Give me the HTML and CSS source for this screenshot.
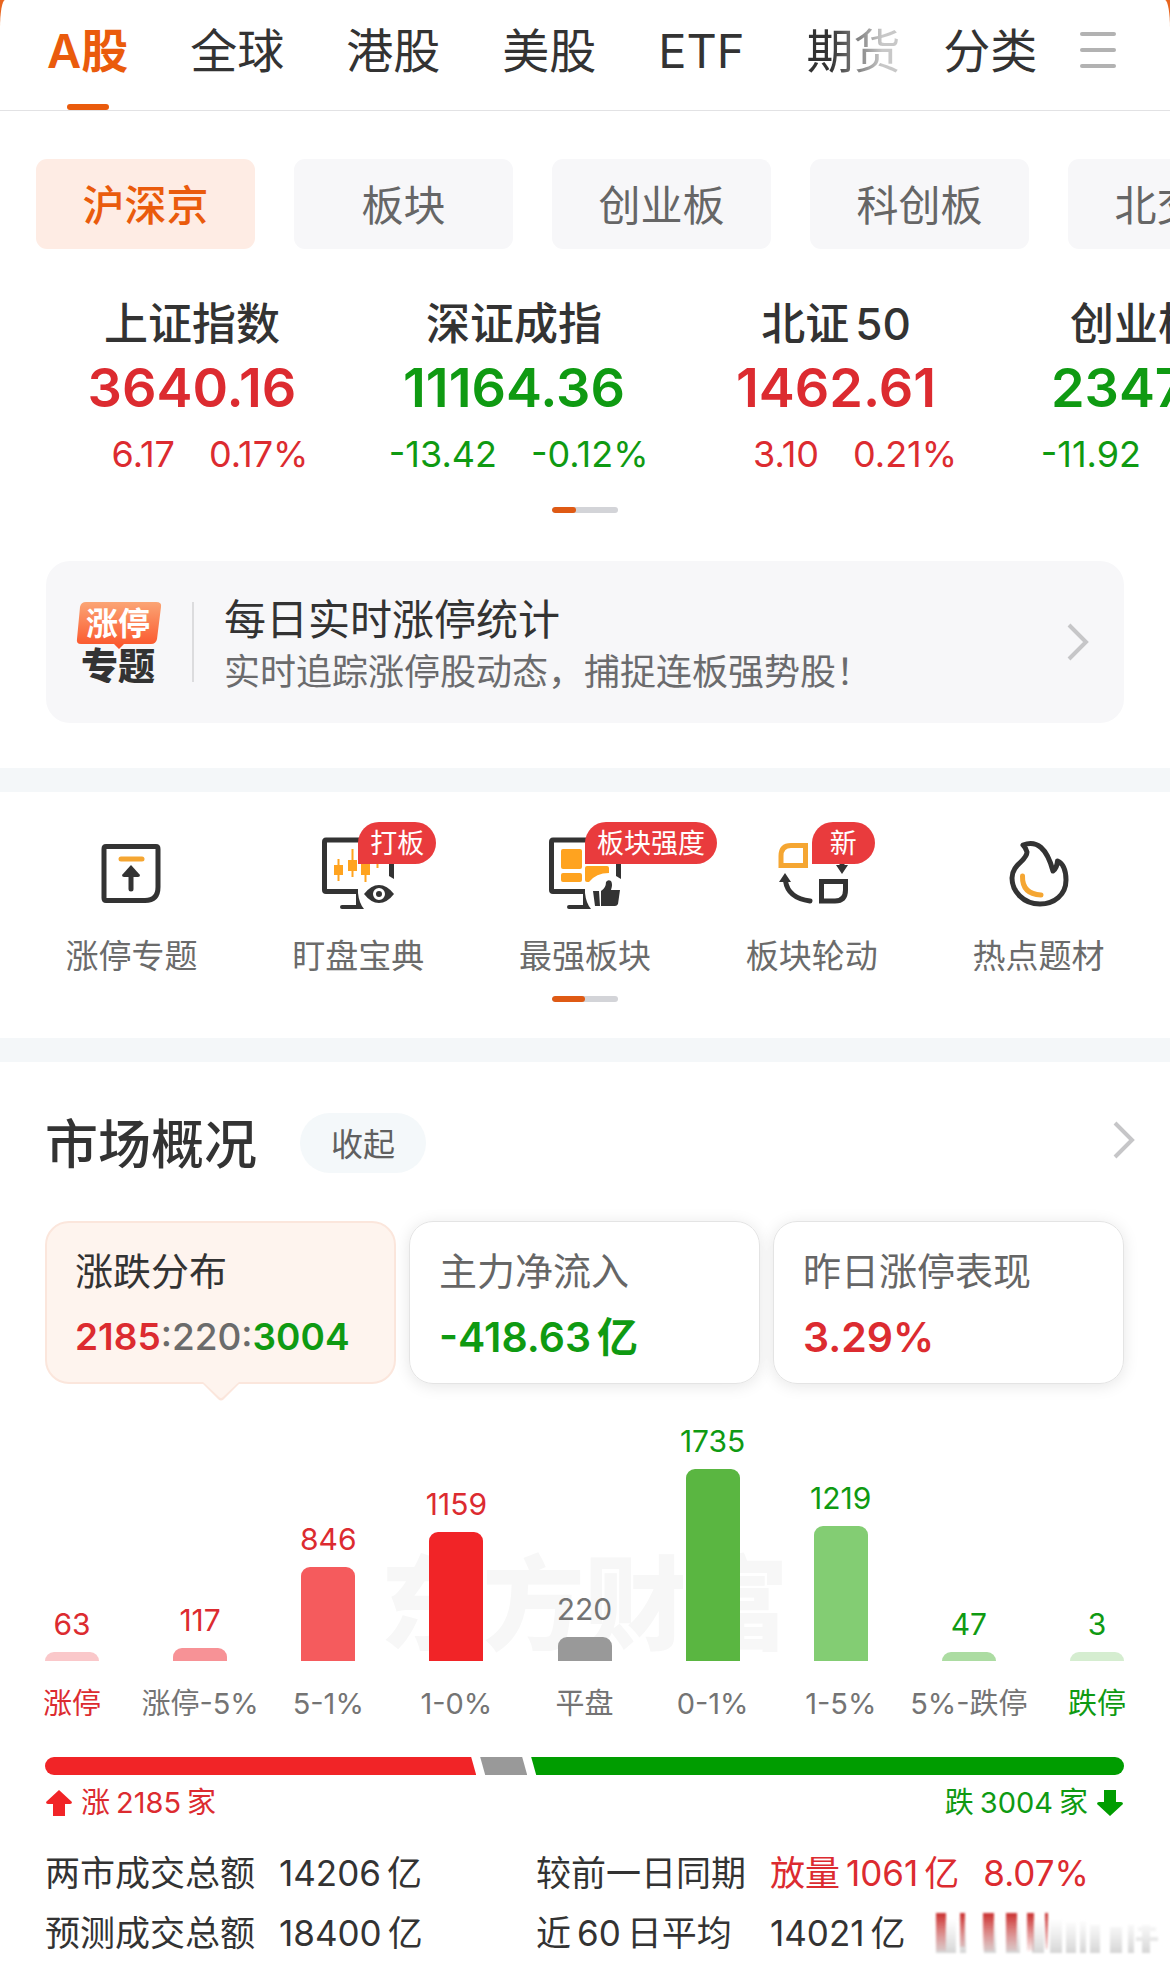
FILE: index.html
```html
<!DOCTYPE html>
<html lang="zh-CN">
  <head>
    <meta charset="UTF-8" />
    <meta name="viewport" content="width=device-width, initial-scale=1.0" />
    <title>A股行情</title>
    <link rel="stylesheet" href="styles.css">
  </head>
  <body>
    <div class="page">
      <nav class="tabs">
        <div class="tab-list">
          <a class="tab active" href="#a">A股</a>
          <a class="tab" href="#global">全球</a>
          <a class="tab" href="#hk">港股</a>
          <a class="tab" href="#us">美股</a>
          <a class="tab" href="#etf">ETF</a>
          <a class="tab fade" href="#futures">期货</a>
        </div>
        <a class="tab" href="#category">分类</a>
        <button class="menu" type="button" aria-label="菜单">
          <span></span><span></span><span></span>
        </button>
      </nav>

      <div class="chips">
        <button class="chip active" type="button">沪深京</button>
        <button class="chip" type="button">板块</button>
        <button class="chip" type="button">创业板</button>
        <button class="chip" type="button">科创板</button>
        <button class="chip" type="button">北交所</button>
      </div>

      <div class="indexes">
        <a class="index up" href="#sh">
          <span class="index-name">上证指数</span>
          <span class="index-value">3640.16</span>
          <span class="index-change"><span>6.17</span><span>0.17%</span></span>
        </a>
        <a class="index down" href="#sz">
          <span class="index-name">深证成指</span>
          <span class="index-value">11164.36</span>
          <span class="index-change"><span>-13.42</span><span>-0.12%</span></span>
        </a>
        <a class="index up" href="#bz">
          <span class="index-name">北证<span class="n">50</span></span>
          <span class="index-value">1462.61</span>
          <span class="index-change"><span>3.10</span><span>0.21%</span></span>
        </a>
        <a class="index down" href="#cy">
          <span class="index-name">创业板指</span>
          <span class="index-value">2347.06</span>
          <span class="index-change"><span>-11.92</span></span>
        </a>
      </div>
      <div class="pager pager-index"><span class="pager-on short"></span></div>

      <a class="banner" href="#limit-up">
        <svg class="banner-logo" width="86" height="82" viewBox="0 0 86 82">
          <defs>
            <linearGradient id="logoBg" x1="0" y1="0" x2="0" y2="1">
              <stop offset="0" stop-color="#fba575" />
              <stop offset="1" stop-color="#fb5228" />
            </linearGradient>
          </defs>
          <path d="M10 1H80Q86 1 85 6L81 38Q80 43 75 43H48L43 48L38 43H5Q0 43 1 38L4 6Q5 1 10 1Z" fill="url(#logoBg)" />
          <text class="logo-top" x="42" y="34">涨停</text>
          <text class="logo-bottom" x="42" y="79">专题</text>
        </svg>
        <span class="banner-text">
          <span class="banner-title">每日实时涨停统计</span>
          <span class="banner-sub">实时追踪涨停股动态，捕捉连板强势股！</span>
        </span>
        <svg class="chevron" width="24" height="40" viewBox="0 0 24 40">
          <path d="M3 3L20 20L3 37" />
        </svg>
      </a>

      <div class="band"></div>

      <div class="quick">
        <a class="quick-item" href="#q1">
          <svg class="icon" viewBox="0 0 72 72">
            <path class="line" d="M11 9.500H61Q63 9.500 63 12V50Q63 63.500 50 63.500H11Q9 63.500 9 61V12Q9 9.500 11 9.500Z" />
            <path class="line gold" d="M26 22H47" />
            <path class="line" d="M36 36V52" />
            <path class="solid" d="M36 28L45 38Q45 40 43 40H29Q27 40 27 38Z" />
          </svg>
          <span class="quick-label">涨停专题</span>
        </a>
        <a class="quick-item" href="#q2">
          <svg class="icon" viewBox="0 0 72 72">
            <path class="line flat" d="M36 54.500H4Q2.500 54.500 2.500 53V5Q2.500 3 4 3H68Q69.500 3 69.500 5V39" />
            <path class="solid" d="M67 25H72V42L67 39Z" />
            <path class="solid" d="M34 56H36Q37 66 42 72H20Q18 72 18 70Q18 68 20 68H34Z" />
            <path class="thin-gold" d="M16.500 22V44M30.500 12V40M43.500 20V45M55.500 20V31" />
            <path class="solid-gold" d="M12 28H21V38H12ZM26 23H35V34H26ZM39 26H48V38H39Z" />
            <path class="solid" fill-rule="evenodd" d="M42 57Q49 48 57 48Q65 48 72 57Q65 66 57 66Q49 66 42 57ZM57 51A6 6 0 1 0 57 63A6 6 0 1 0 57 51ZM57 54A3 3 0 1 1 57 60A3 3 0 1 1 57 54Z" />
          </svg>
          <span class="badge">打板</span>
          <span class="quick-label">盯盘宝典</span>
        </a>
        <a class="quick-item" href="#q3">
          <svg class="icon" viewBox="0 0 72 72">
            <path class="line flat" d="M36 54.500H4Q2.500 54.500 2.500 53V5Q2.500 3 4 3H68Q69.500 3 69.500 5V39" />
            <path class="solid" d="M67 25H72V42L67 39Z" />
            <path class="solid" d="M34 56H36Q37 66 42 72H20Q18 72 18 70Q18 68 20 68H34Z" />
            <rect class="solid-gold" x="12" y="12" width="21" height="20" rx="2" />
            <rect class="solid-gold" x="12" y="36" width="21" height="9" rx="2" />
            <path class="solid-gold" d="M38 29H58Q60 29 60 31V36Q47 36 40 45H38Q36 45 36 43V31Q36 29 38 29Z" />
            <path class="solid" d="M44 54H50L51 69H46ZM52 54Q57 51 57 45Q59 42 62 44Q64 47 62 53H71L69 67Q68 69 66 69H52Z" />
          </svg>
          <span class="badge">板块强度</span>
          <span class="quick-label">最强板块</span>
        </a>
        <a class="quick-item" href="#q4">
          <svg class="icon" viewBox="0 0 72 72">
            <path class="line gold sharp" d="M15 8.500H29.500V28.500H5V19Q5 8.500 15 8.500Z" />
            <path class="line sharp" d="M45.500 44.500H69.500V53Q69.500 64 59 64H45.500Z" />
            <path class="line" d="M9.500 44Q12 61 34 64" />
            <path class="line" d="M66 18V28" />
            <path class="solid" d="M9 36L15 45H3ZM66 37L60 28H72Z" />
          </svg>
          <span class="badge">新</span>
          <span class="quick-label">板块轮动</span>
        </a>
        <a class="quick-item" href="#q5">
          <svg class="icon" viewBox="0 0 72 72">
            <path class="line" d="M20 8Q41 0 50 34Q54 31 54.500 24Q63 28 63 43C63 58 51 67 37 67C20 67 9 54 9 41C9 27 24 24 24 15Q23 11 20 8Z" />
            <path class="line gold" d="M19.500 39Q19 57 38 58" />
          </svg>
          <span class="quick-label">热点题材</span>
        </a>
      </div>
      <div class="pager pager-quick"><span class="pager-on"></span></div>

      <div class="band"></div>

      <section class="market">
        <div class="market-head">
          <h2>市场概况</h2>
          <button class="fold" type="button">收起</button>
          <a class="more" href="#market" aria-label="更多">
            <svg class="chevron" width="24" height="40" viewBox="0 0 24 40">
              <path d="M3 3L20 20L3 37" />
            </svg>
          </a>
        </div>

        <div class="cards">
          <button class="card active" type="button">
            <span class="card-label">涨跌分布</span>
            <span class="card-value small"><b class="up">2185</b>:220:<b class="down">3004</b></span>
            <svg class="card-arrow" width="40" height="20" viewBox="0 0 40 20">
              <path d="M0 0H40L23 17Q20 20 17 17Z" fill="#fbe6dc" />
              <path d="M2 0H38L22 15Q20 17 18 15Z" fill="#fef4ee" />
            </svg>
          </button>
          <button class="card" type="button">
            <span class="card-label">主力净流入</span>
            <span class="card-value down"><b>-418.63<span class="n">亿</span></b></span>
          </button>
          <button class="card" type="button">
            <span class="card-label">昨日涨停表现</span>
            <span class="card-value up"><b>3.29%</b></span>
          </button>
        </div>

        <div class="chart">
          <div class="watermark">东方财富</div>
          <div class="col up"><span class="num">63</span><span class="bar r1" style="height: 9px"></span><span class="cat">涨停</span></div>
          <div class="col up"><span class="num">117</span><span class="bar r2" style="height: 13px"></span><span class="cat gray">涨停-5%</span></div>
          <div class="col up"><span class="num">846</span><span class="bar r3" style="height: 94px"></span><span class="cat gray">5-1%</span></div>
          <div class="col up"><span class="num">1159</span><span class="bar r4" style="height: 129px"></span><span class="cat gray">1-0%</span></div>
          <div class="col gray"><span class="num">220</span><span class="bar flat" style="height: 24px"></span><span class="cat">平盘</span></div>
          <div class="col down"><span class="num">1735</span><span class="bar g4" style="height: 192px"></span><span class="cat gray">0-1%</span></div>
          <div class="col down"><span class="num">1219</span><span class="bar g3" style="height: 135px"></span><span class="cat gray">1-5%</span></div>
          <div class="col down"><span class="num">47</span><span class="bar g2" style="height: 9px"></span><span class="cat gray">5%-跌停</span></div>
          <div class="col down"><span class="num">3</span><span class="bar g1" style="height: 9px"></span><span class="cat">跌停</span></div>
        </div>

        <div class="ratio">
          <span class="ratio-up" style="flex-grow: 2185"></span>
          <span class="ratio-flat"></span>
          <span class="ratio-down" style="flex-grow: 3004"></span>
        </div>
        <div class="legend">
          <div class="legend-item up">
            <svg width="28" height="28" viewBox="0 0 28 28"><path d="M14 1L27 13Q27 15 25 15H20V27H8V15H3Q1 15 1 13Z" fill="#f12427" /></svg>
            <span>涨<span class="n both">2185</span>家</span>
          </div>
          <div class="legend-item down">
            <span>跌<span class="n both">3004</span>家</span>
            <svg width="28" height="28" viewBox="0 0 28 28"><path d="M14 27L27 15Q27 13 25 13H20V1H8V13H3Q1 13 1 15Z" fill="#009d00" /></svg>
          </div>
        </div>

        <div class="stats">
          <div class="stat"><span class="stat-label">两市成交总额</span><span>14206<span class="n">亿</span></span></div>
          <div class="stat"><span class="stat-label">较前一日同期</span><span class="up">放量<span class="n both">1061</span>亿</span><span class="up">8.07%</span></div>
          <div class="stat"><span class="stat-label">预测成交总额</span><span>18400<span class="n">亿</span></span></div>
          <div class="stat">
            <span class="stat-label">近<span class="n both">60</span>日平均</span><span>14021<span class="n">亿</span></span>
            <svg class="smudge" width="230" height="44" viewBox="0 0 230 44">
              <defs>
                <linearGradient id="redFade" x1="0" y1="0" x2="0" y2="1">
                  <stop offset="0" stop-color="#c9302f" />
                  <stop offset="1" stop-color="#c9302f" stop-opacity="0.1" />
                </linearGradient>
                <linearGradient id="grayFade" x1="0" y1="0" x2="0" y2="1">
                  <stop offset="0" stop-color="#ccc" stop-opacity="0" />
                  <stop offset="1" stop-color="#c4c4c4" stop-opacity="0.7" />
                </linearGradient>
                <filter id="soft"><feGaussianBlur stdDeviation="1" /></filter>
              </defs>
              <g filter="url(#soft)">
                <path fill="url(#grayFade)" d="M6 8H26V42H6ZM30 8H36V42H30ZM54 8H66V42H54ZM76 8H90V42H76ZM102 8H114V42H102ZM120 8H132V42H120ZM136 12H146V42H136ZM150 10H156V42H150ZM160 14H170V42H160ZM180 16H192V42H180ZM198 14H204V42H198ZM208 16H226V20H208ZM206 26H228V30H206ZM212 14H220V42H212Z" />
                <path fill="url(#redFade)" d="M6 2H16V40H6ZM30 2H35V36H30ZM53 2H64V40H53ZM76 2H87V40H76ZM97 2H104V40H97ZM115 2H118V38H115Z" />
              </g>
            </svg>
          </div>
        </div>
      </section>
    </div>
  </body>
</html>
```
FILE: styles.css
```css
* {
  box-sizing: border-box;
}

body {
  margin: 0;
  background-color: #e8651f;
  color: #333;
  font-family: Inter, "Noto Sans CJK SC", sans-serif;
}

.page {
  background-color: #fff;
  border-radius: 5px 5px 0 0 / 28px 28px 0 0;
  overflow: hidden;
}

a {
  color: inherit;
  text-decoration: none;
}

button {
  padding: 0;
  border: none;
  background: none;
  color: inherit;
  font-family: inherit;
  cursor: pointer;
}

b {
  font-weight: 600;
}

/* gap between digits and chinese text */
.n {
  margin-left: 6px;
}

.n.both {
  margin-right: 6px;
}

.up {
  color: #dc2b30;
}

.down {
  color: #0f9a12;
}

.gray {
  color: #747474;
}

/* top tabs */
.tabs {
  display: flex;
  justify-content: space-between;
  height: 111px;
  padding: 0 54px 0 47px;
  border-bottom: 1px solid #e2e2e4;
}

.tab-list {
  display: flex;
  gap: 62px;
}

.tab {
  position: relative;
  font-size: 47px;
  line-height: 102px;
}

.tab.active {
  color: #ea5b0c;
  font-weight: 600;
}

.tab.active::after {
  content: "";
  position: absolute;
  bottom: 0;
  left: 50%;
  width: 42px;
  height: 6px;
  margin-left: -21px;
  border-radius: 3px;
  background-color: #ea5b0c;
}

.tab.fade {
  background: linear-gradient(to right, #333 25%, #c8c8c8 80%);
  background-clip: text;
  -webkit-background-clip: text;
  color: transparent;
}

.menu {
  display: flex;
  flex-direction: column;
  justify-content: space-between;
  width: 36px;
  height: 36px;
  margin-top: 32px;
}

.menu span {
  width: 36px;
  height: 4px;
  border-radius: 2px;
  background-color: #b2b2b2;
}

/* sub tabs */
.chips {
  display: flex;
  gap: 39px;
  padding: 48px 0 0 36px;
  overflow: hidden;
}

.chip {
  flex: 0 0 219px;
  height: 90px;
  padding-bottom: 3px;
  border-radius: 11px;
  background-color: #f7f7f9;
  color: #666;
  font-size: 42px;
}

.chip.active {
  background-color: #feece4;
  color: #ea5b0c;
  font-weight: 500;
}

/* index quotes */
.indexes {
  display: flex;
  padding: 45px 0 0 31px;
  overflow: hidden;
}

.index {
  flex: 0 0 322px;
  display: flex;
  flex-direction: column;
  text-align: center;
}

.index-name {
  color: #333;
  font-size: 44px;
  font-weight: 500;
  line-height: 60px;
}

.index-value {
  font-size: 54px;
  font-weight: 600;
  line-height: 68px;
}

.index-change {
  display: grid;
  grid-template-columns: 1fr 1fr;
  gap: 34px;
  margin-top: 10px;
  font-size: 36px;
  line-height: 44px;
  text-align: left;
}

.index-change span:first-child {
  text-align: right;
}

.pager {
  width: 66px;
  height: 6px;
  margin: 0 auto;
  border-radius: 3px;
  background-color: #d3d4d8;
  overflow: hidden;
}

.pager-on {
  display: block;
  width: 33px;
  height: 6px;
  border-radius: 3px;
  background-color: #df5a14;
}

.pager-on.short {
  width: 24px;
}

.pager-index {
  margin-top: 31px;
}

/* banner */
.banner {
  display: flex;
  align-items: center;
  height: 162px;
  margin: 48px 46px 45px;
  padding: 0 34px 0 30px;
  border-radius: 24px;
  background-color: #f7f7f9;
}

.banner-logo {
  flex: none;
}

.logo-top,
.logo-bottom {
  text-anchor: middle;
  font-weight: 700;
}

.logo-top {
  fill: #fff;
  font-size: 32px;
}

.logo-bottom {
  fill: #333;
  font-size: 37px;
  font-weight: 900;
}

.banner-text {
  flex: 1;
  display: flex;
  flex-direction: column;
  margin-left: 30px;
  padding: 3px 0 0 32px;
  background: linear-gradient(#dcdcde, #dcdcde) no-repeat left center / 2px 80px;
}

.banner-title {
  font-size: 42px;
  line-height: 56px;
}

.banner-sub {
  color: #6b6b6d;
  font-size: 36px;
  line-height: 48px;
}

.chevron {
  display: block;
  flex: none;
  fill: none;
  stroke: #c6c6c8;
  stroke-width: 4;
}

.band {
  height: 24px;
  background-color: #f4f7f9;
}

/* shortcuts */
.quick {
  display: grid;
  grid-template-columns: repeat(5, 1fr);
  padding: 30px 18px 0;
}

.quick-item {
  position: relative;
  display: flex;
  flex-direction: column;
  align-items: center;
  padding-top: 15px;
}

.icon {
  width: 72px;
  height: 72px;
}

.line {
  fill: none;
  stroke: #333;
  stroke-width: 5;
  stroke-linecap: round;
  stroke-linejoin: round;
}

.line.flat {
  stroke-linecap: butt;
}

.line.sharp {
  stroke-linejoin: miter;
}

.line.gold {
  stroke: #f5a632;
}

.thin-gold {
  fill: none;
  stroke: #ffa31f;
  stroke-width: 2;
}

.solid {
  fill: #333;
}

.solid-gold {
  fill: #ffa31f;
}

.badge {
  position: absolute;
  top: 0;
  left: 50%;
  min-width: 63px;
  padding: 1px 12px 0;
  border-radius: 21px 21px 21px 0;
  background-color: #e93b3d;
  color: #fff;
  font-size: 27px;
  line-height: 41px;
  text-align: center;
  white-space: nowrap;
}

.quick-label {
  margin-top: 23px;
  color: #6b6b6b;
  font-size: 33px;
  line-height: 48px;
}

.pager-quick {
  margin-top: 16px;
  margin-bottom: 36px;
}

/* market overview */
.market {
  padding: 51px 46px 10px 45px;
}

.market-head {
  display: flex;
  align-items: center;
  height: 60px;
}

h2 {
  margin: 0;
  padding-top: 3px;
  font-size: 53px;
  font-weight: 500;
  line-height: 60px;
}

.fold {
  width: 126px;
  height: 60px;
  margin-left: 43px;
  padding-bottom: 3px;
  border-radius: 30px;
  background-color: #f4f8fa;
  color: #606060;
  font-size: 32px;
}

.more {
  margin-left: auto;
  margin-right: -12px;
  padding-bottom: 6px;
}

.cards {
  display: grid;
  grid-template-columns: repeat(3, 1fr);
  gap: 13px;
  margin: 48px 0 39px;
}

.card {
  position: relative;
  display: flex;
  flex-direction: column;
  height: 163px;
  padding: 23px 29px;
  border: 1px solid #e4e4e4;
  border-radius: 24px;
  box-shadow: 0 2px 16px rgba(0, 0, 0, 0.1);
  text-align: left;
}

.card.active {
  border: 2px solid #fbe6dc;
  padding: 22px 28px;
  background-color: #fef4ee;
  box-shadow: none;
}

.card-label {
  color: #666;
  font-size: 38px;
  line-height: 52px;
}

.card.active .card-label {
  color: #333;
}

.card-value {
  margin-top: 12px;
  font-size: 41px;
  line-height: 56px;
}

.card-value.small {
  color: #6b6b6b;
  font-size: 37px;
  font-weight: 500;
}

.card-arrow {
  position: absolute;
  top: 159px;
  left: 50%;
  margin-left: -20px;
}

/* distribution chart */
.chart {
  position: relative;
  display: flex;
  justify-content: space-between;
  align-items: flex-end;
  height: 301px;
}

.watermark {
  position: absolute;
  right: 0;
  left: 0;
  top: 112px;
  color: #f7f7f7;
  font-size: 102px;
  font-style: oblique 6deg;
  font-weight: 900;
  line-height: 140px;
  text-align: center;
}

.col {
  position: relative;
  display: flex;
  flex-direction: column;
  align-items: center;
  width: 54px;
  white-space: nowrap;
}

.num {
  font-size: 30px;
  line-height: 36px;
}

.bar {
  width: 54px;
  margin-top: 10px;
  border-radius: 9px 9px 0 0;
}

.cat {
  margin-top: 23px;
  font-size: 29px;
  line-height: 40px;
}

.r1 { background-color: #fac8ca; }
.r2 { background-color: #f79296; }
.r3 { background-color: #f55b5d; }
.r4 { background-color: #f12427; }
.bar.flat { background-color: #999; }
.g4 { background-color: #5ab641; }
.g3 { background-color: #83cd73; }
.g2 { background-color: #acdca2; }
.g1 { background-color: #d5edd0; }

/* up / down ratio */
.ratio {
  display: flex;
  gap: 4px;
  height: 18px;
  margin-top: 33px;
}

.ratio-up {
  border-radius: 9px 0 0 9px;
  background-color: #f12427;
  clip-path: polygon(0 0, calc(100% - 5px) 0, 100% 100%, 0 100%);
}

.ratio-flat {
  flex: 0 0 47px;
  background-color: #999;
  clip-path: polygon(0 0, calc(100% - 5px) 0, 100% 100%, 5px 100%);
}

.ratio-down {
  border-radius: 0 9px 9px 0;
  background-color: #009d00;
  clip-path: polygon(0 0, 100% 0, 100% 100%, 5px 100%);
}

.legend {
  display: flex;
  justify-content: space-between;
  margin-top: 8px;
  font-size: 29px;
  line-height: 40px;
}

.legend-item {
  display: flex;
  align-items: center;
  gap: 8px;
}

.stats {
  display: grid;
  grid-template-columns: minmax(0, 491fr) minmax(0, 588fr);
  margin-top: 20px;
  font-size: 35px;
  line-height: 60px;
}

.stat {
  display: flex;
  align-items: center;
  gap: 24px;
  white-space: nowrap;
}

.stat-label {
  min-width: 210px;
}

.smudge {
  flex: none;
}
```
